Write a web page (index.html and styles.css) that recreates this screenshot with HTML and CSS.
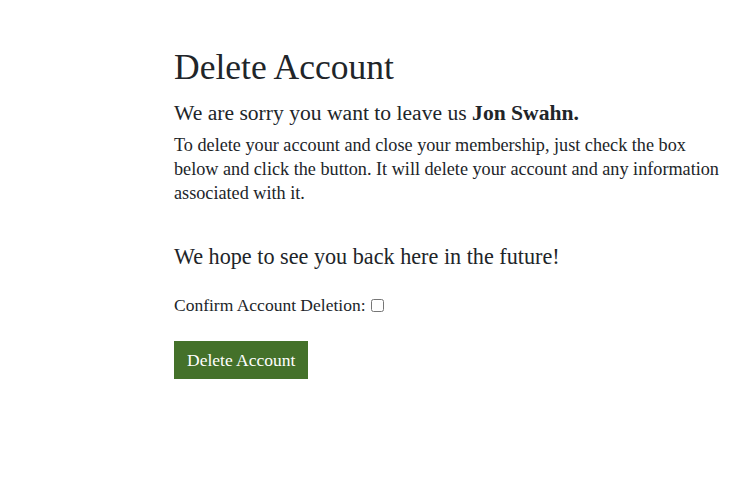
FILE: index.html
```html
<!DOCTYPE html>
<html>
<head>
<meta charset="utf-8">
<link rel="stylesheet" href="styles.css">
</head>
<body>
<main class="page">
  <h1 class="title">Delete Account</h1>
  <h4 class="sub">We are sorry you want to leave us <strong>Jon Swahn.</strong></h4>
  <p class="text">To delete your account and close your membership, just check the box below and click the button. It will delete your account and any information associated with it.</p>
  <h4 class="sub hope">We hope to see you back here in the future!</h4>
  <form class="form">
    <label class="confirm">Confirm Account Deletion: <input type="checkbox" class="check"></label>
    <button type="button" class="btn">Delete Account</button>
  </form>
</main>
</body>
</html>
```
FILE: styles.css
```css
html, body {
  margin: 0;
  padding: 0;
  background: #fff;
}
body {
  font-family: "Liberation Serif", "DejaVu Serif", serif;
  color: #212529;
  font-size: 17.5px;
  line-height: 24px;
}
.page {
  padding: 43px 0 0 174px;
  width: 550px;
}
.title {
  margin: 0;
  font-size: 35.5px;
  font-weight: 400;
  line-height: 48px;
}
.sub {
  margin: 0;
  margin-top: 9px;
  font-size: 21.6px;
  font-weight: 400;
  line-height: 26px;
}
.sub strong {
  font-weight: 700;
}
.text {
  margin: 7px 0 0;
  font-size: 18.2px;
}
.hope {
  margin-top: 39px;
  font-size: 22.2px;
}
.form {
  margin-top: 23px;
  display: flex;
  flex-direction: column;
  align-items: flex-start;
}
.confirm {
  display: flex;
  align-items: center;
  gap: 5px;
}
.check {
  margin: 0;
  width: 13px;
  height: 13px;
}
.btn {
  margin-top: 24px;
  font-family: inherit;
  font-size: 17.5px;
  color: #fff;
  background: #44712a;
  border: none;
  border-radius: 0;
  padding: 7px 13px;
  line-height: 24px;
}
```
